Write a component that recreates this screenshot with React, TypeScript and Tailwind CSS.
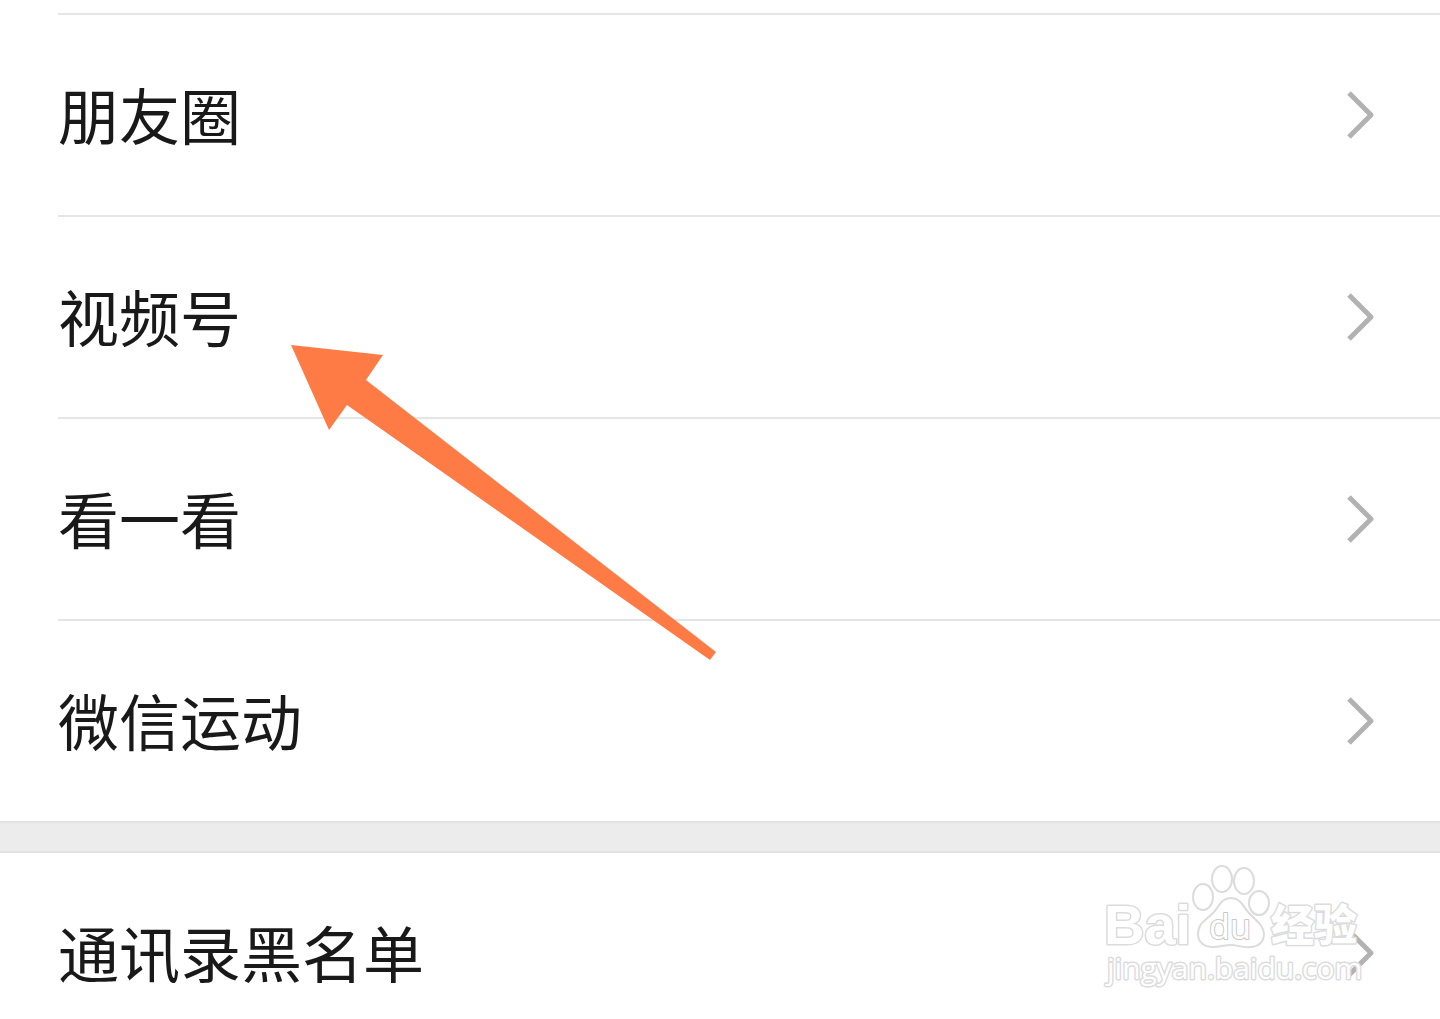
const privacyItems = ["朋友圈", "视频号", "看一看", "微信运动"];

function Chevron() {
  return (
    <svg width="32" height="52" viewBox="0 0 32 52" fill="none" aria-hidden="true">
      <path d="M5 4L27 26L5 48" stroke="#b2b2b2" strokeWidth="5" strokeLinejoin="round" />
    </svg>
  );
}

function Row({ label }: { label: string }) {
  return (
    <a href="#" className="flex h-[200px] items-center justify-between pr-16">
      <span className="pb-[3px] text-[61px] leading-[80px]">{label}</span>
      <Chevron />
    </a>
  );
}

function Watermark() {
  return (
    <svg
      className="pointer-events-none absolute top-2 right-[70px]"
      width="270"
      height="135"
      viewBox="0 0 270 135"
      fill="#ffffff"
      stroke="#dcdcdc"
      strokeWidth="2"
      strokeLinejoin="round"
    >
      {/* paw */}
      <ellipse cx="103" cy="36" rx="10" ry="13" />
      <ellipse cx="122" cy="18" rx="10" ry="13" />
      <ellipse cx="144" cy="20" rx="10" ry="13" />
      <ellipse cx="159" cy="42" rx="10" ry="12" />
      <path d="M131 37C121 37 119 46 113 52C106 59 98 62 98 73C98 81 104 86 113 86C120 86 124 84 131 84C138 84 143 87 150 86C158 86 164 81 164 73C164 64 155 59 149 52C143 46 141 37 131 37Z" />
      <g paintOrder="stroke" strokeWidth="3">
        <text x="4" y="83" fontFamily="Liberation Sans, sans-serif" fontWeight="700" fontSize="56">
          Bai
        </text>
        <text x="109" y="78" fontFamily="Noto Sans, sans-serif" fontSize="34" strokeWidth="2" stroke="#c8c8c8">
          du
        </text>
        <text x="171" y="80" fontFamily="Noto Sans CJK SC, sans-serif" fontWeight="900" fontSize="43">
          经验
        </text>
        <text x="7" y="118" fontFamily="Open Sans, sans-serif" fontSize="30">
          jingyan.baidu.com
        </text>
      </g>
    </svg>
  );
}

export default function App() {
  return (
    <main
      lang="zh-CN"
      className="relative h-screen overflow-hidden bg-white text-[#191919] font-['Noto_Sans_CJK_SC',sans-serif]"
    >
      {/* privacy list */}
      <ul className="pt-[13px]">
        {privacyItems.map((item) => (
          <li key={item} className="ml-[58px] border-t-2 border-[#e5e5e5]">
            <Row label={item} />
          </li>
        ))}
      </ul>

      <div className="h-8 border-y-2 border-[#e2e2e2] bg-[#ececec]" />

      {/* blacklist */}
      <section className="relative">
        <div className="ml-[58px]">
          <Row label="通讯录黑名单" />
        </div>
        <Watermark />
      </section>

      {/* pointer */}
      <svg
        className="pointer-events-none absolute top-[344px] left-[290px]"
        width="430"
        height="320"
        viewBox="290 344 430 320"
        aria-hidden="true"
      >
        <path d="M291 345L383 355L366 380L716 652L710 660L347 405L329 430Z" fill="#ff7b45" />
      </svg>
    </main>
  );
}
